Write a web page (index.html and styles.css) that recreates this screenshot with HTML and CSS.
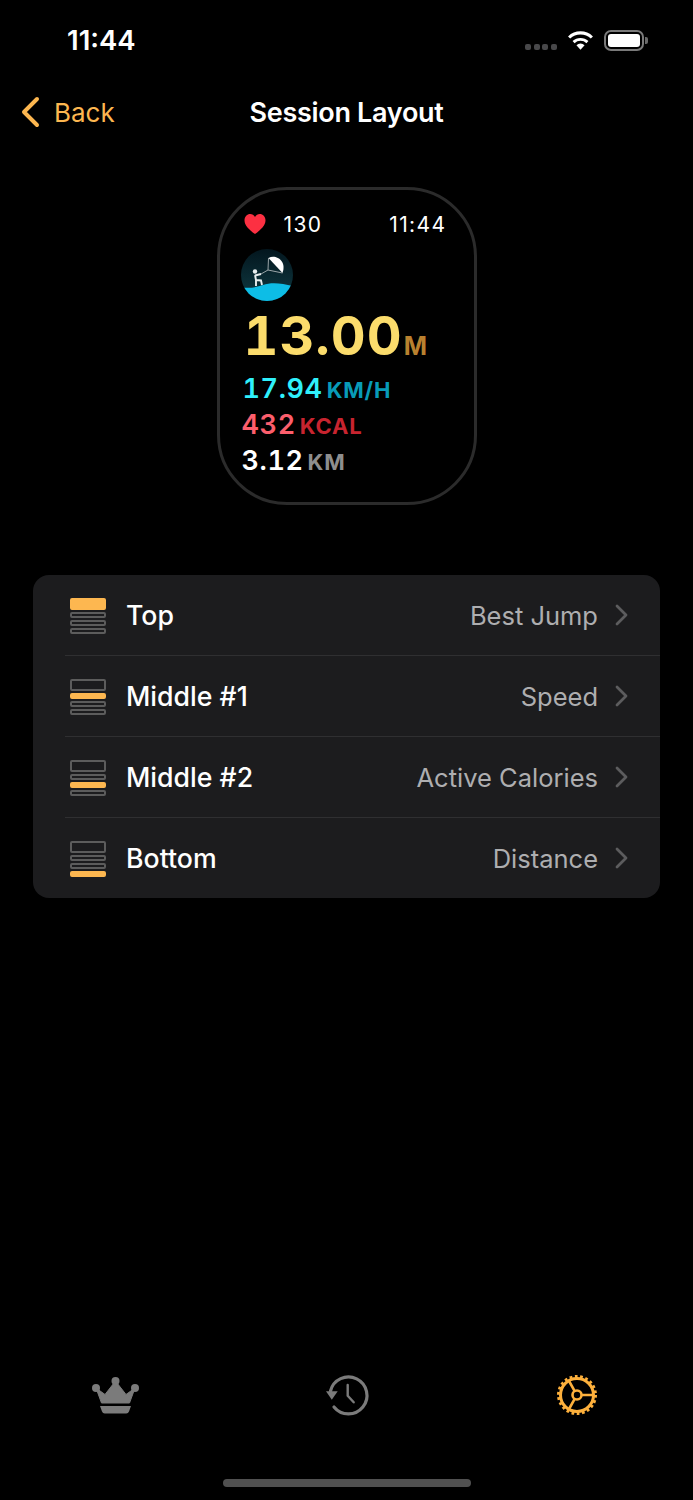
FILE: index.html
```html
<!DOCTYPE html>
<html lang="en">
<head>
    <meta charset="UTF-8">
    <title>Session Layout</title>
    <link rel="stylesheet" href="styles.css">
</head>
<body>
    <div class="screen">
        <!-- Status bar -->
        <div class="status-bar">
            <span class="clock">11:44</span>
            <div class="status-icons">
                <div class="signal"><i></i><i></i><i></i><i></i></div>
                <svg class="wifi" width="27" height="20" viewBox="0 0 28 20">
                    <path d="M14 20l-4.200-4.600a6 6 0 0 1 8.400 0z" fill="#fff"/>
                    <path d="M6.800 12.200a10.500 10.500 0 0 1 14.400 0" fill="none" stroke="#fff" stroke-width="3"/>
                    <path d="M2.200 7.400a17 17 0 0 1 23.600 0" fill="none" stroke="#fff" stroke-width="3.200"/>
                </svg>
                <div class="battery"><div class="battery-fill"></div></div>
                <div class="battery-nub"></div>
            </div>
        </div>

        <!-- Nav bar -->
        <div class="nav-bar">
            <div class="back">
                <svg width="20" height="32" viewBox="0 0 20 32"><path d="M17 3L4 16l13 13" fill="none" stroke="#fdb750" stroke-width="4" stroke-linecap="round" stroke-linejoin="round"/></svg>
                <span>Back</span>
            </div>
            <div class="nav-title">Session Layout</div>
        </div>

        <!-- Watch preview -->
        <div class="watch">
            <div class="watch-top">
                <svg width="22" height="20" viewBox="0 0 22 20"><path d="M11 20C5 15.500 0.500 11.500 0.500 6.200 0.500 2.600 3.200 0 6.200 0 8.200 0 10 1 11 3 12 1 13.800 0 15.800 0 18.800 0 21.500 2.600 21.500 6.200 21.500 11.500 17 15.500 11 20z" fill="#fc3042"/></svg>
                <span class="bpm">130</span>
                <span class="watch-time">11:44</span>
            </div>
            <svg class="sport-logo" width="52" height="52" viewBox="0 0 52 52">
                <defs>
                    <clipPath id="logo-clip"><circle cx="26" cy="26" r="26"/></clipPath>
                    <linearGradient id="logo-sky" x1="0" y1="0" x2="0" y2="1">
                        <stop offset="0" stop-color="#03161e"/>
                        <stop offset="0.7" stop-color="#0c3038"/>
                    </linearGradient>
                </defs>
                <g clip-path="url(#logo-clip)">
                    <rect width="52" height="52" fill="url(#logo-sky)"/>
                    <path d="M0 38C8 40 16 38 22 36 30 33 40 34 52 37V52H0z" fill="#0dbde6"/>
                </g>
                <path d="M27.500 9C35 5 46 12 41.500 24z" fill="#fff"/>
                <path d="M27.500 9L27 21 41.500 24M27 21L20 25" fill="none" stroke="#9aa5a8" stroke-width="1"/>
                <circle cx="14" cy="22.500" r="2.200" fill="#e8eeee"/>
                <path d="M14 26L15 31 20 31.500 21 36M15 31L15 37M14 26.500L20 25" fill="none" stroke="#e8eeee" stroke-width="1.900"/>
            </svg>
            <div class="metric metric-main"><span class="num">13.00</span><span class="unit">M</span></div>
            <div class="metric metric-speed"><span class="num">17.94</span><span class="unit">KM/H</span></div>
            <div class="metric metric-cal"><span class="num">432</span><span class="unit">KCAL</span></div>
            <div class="metric metric-dist"><span class="num">3.12</span><span class="unit">KM</span></div>
        </div>

        <!-- Settings list -->
        <div class="list">
            <div class="row">
                <div class="slots"><i class="big on"></i><i></i><i></i><i></i></div>
                <span class="row-label">Top</span>
                <span class="row-value">Best Jump</span>
                <svg class="chevron" width="13" height="22" viewBox="0 0 13 22"><path d="M2 2l9 9-9 9" fill="none" stroke="#5c5c5e" stroke-width="2.800" stroke-linecap="round" stroke-linejoin="round"/></svg>
            </div>
            <div class="row">
                <div class="slots"><i class="big"></i><i class="on"></i><i></i><i></i></div>
                <span class="row-label">Middle #1</span>
                <span class="row-value">Speed</span>
                <svg class="chevron" width="13" height="22" viewBox="0 0 13 22"><path d="M2 2l9 9-9 9" fill="none" stroke="#5c5c5e" stroke-width="2.800" stroke-linecap="round" stroke-linejoin="round"/></svg>
            </div>
            <div class="row">
                <div class="slots"><i class="big"></i><i></i><i class="on"></i><i></i></div>
                <span class="row-label">Middle #2</span>
                <span class="row-value">Active Calories</span>
                <svg class="chevron" width="13" height="22" viewBox="0 0 13 22"><path d="M2 2l9 9-9 9" fill="none" stroke="#5c5c5e" stroke-width="2.800" stroke-linecap="round" stroke-linejoin="round"/></svg>
            </div>
            <div class="row">
                <div class="slots"><i class="big"></i><i></i><i></i><i class="on"></i></div>
                <span class="row-label">Bottom</span>
                <span class="row-value">Distance</span>
                <svg class="chevron" width="13" height="22" viewBox="0 0 13 22"><path d="M2 2l9 9-9 9" fill="none" stroke="#5c5c5e" stroke-width="2.800" stroke-linecap="round" stroke-linejoin="round"/></svg>
            </div>
        </div>

        <!-- Tab bar -->
        <div class="tab-bar">
            <svg width="48" height="37" viewBox="0 0 48 37">
                <circle cx="23.500" cy="4" r="4" fill="#7b7b7b"/>
                <circle cx="4" cy="11" r="4" fill="#7b7b7b"/>
                <circle cx="43" cy="11" r="4" fill="#7b7b7b"/>
                <path d="M4 11L13 17.500 23.500 4 34 17.500 43 11 37.500 26H9.500z" fill="#7b7b7b" stroke="#7b7b7b" stroke-width="1" stroke-linejoin="round"/>
                <path d="M8 29H39L37 34.500A3 3 0 0 1 34 36.500H13A3 3 0 0 1 10 34.500z" fill="#7b7b7b"/>
            </svg>
            <svg width="46" height="44" viewBox="0 0 46 44">
                <path d="M5.500 18A18.500 18.500 0 1 1 9 34" fill="none" stroke="#7b7b7b" stroke-width="3.200" stroke-linecap="round"/>
                <path d="M1 18.300H12.700L6.800 26.700z" fill="#7b7b7b"/>
                <path d="M22.700 12V22.700L28.700 29.300" fill="none" stroke="#7b7b7b" stroke-width="2.400" stroke-linecap="round" stroke-linejoin="round"/>
            </svg>
            <svg width="44" height="44" viewBox="0 0 44 44">
                <circle cx="22" cy="22" r="16.500" fill="none" stroke="#fdb03c" stroke-width="3"/>
                <circle cx="22" cy="22" r="18.500" fill="none" stroke="#fdb03c" stroke-width="3" stroke-dasharray="2.700 2.580"/>
                <circle cx="22" cy="22" r="4.500" fill="none" stroke="#fdb03c" stroke-width="2.600"/>
                <path d="M26.500 22H38M19.700 18.100L14 8M19.700 25.900L14 36" fill="none" stroke="#fdb03c" stroke-width="2.600"/>
            </svg>
        </div>
        <div class="home-indicator"></div>
    </div>
</body>
</html>
```

FILE: styles.css
```css
body {
    margin: 0;
    background-color: #000;
    font-family: Inter, "Liberation Sans", sans-serif;
    color: white;
}
.screen {
    height: 1500px;
    display: flex;
    flex-direction: column;
    overflow: hidden;
}

/* Status bar */
.status-bar {
    height: 80px;
    display: flex;
    justify-content: space-between;
    align-items: center;
    padding: 0 45px 0 67px;
    box-sizing: border-box;
}
.clock {
    font-size: 27.500px;
    font-weight: 600;
}
.status-icons {
    display: flex;
    align-items: center;
}
.signal {
    display: flex;
    gap: 2.700px;
    margin-right: 10px;
    margin-top: 14px;
}
.signal i {
    width: 6px;
    height: 6px;
    border-radius: 2px;
    background-color: #48484a;
}
.wifi {
    margin-right: 10px;
}
.battery {
    width: 40px;
    height: 21px;
    padding: 2px;
    border: 2px solid #7a7a7a;
    border-radius: 7px;
    box-sizing: border-box;
}
.battery-fill {
    height: 100%;
    background-color: #fff;
    border-radius: 3px;
}
.battery-nub {
    width: 3px;
    height: 7px;
    margin-left: 1px;
    background-color: #6a6a6a;
    border-radius: 0 2px 2px 0;
}

/* Nav bar */
.nav-bar {
    height: 64px;
    display: flex;
    align-items: center;
    justify-content: center;
    position: relative;
}
.back {
    position: absolute;
    left: 20px;
    top: 16px;
    display: flex;
    align-items: center;
    gap: 14px;
    color: #fdb750;
    font-size: 26px;
}
.nav-title {
    font-size: 27px;
    font-weight: 600;
    letter-spacing: -0.3px;
}

/* Watch */
.watch {
    width: 260px;
    height: 318px;
    margin: 43px auto 0;
    padding: 22px 24px 0;
    border: 3px solid #2b2b2b;
    border-radius: 70px;
    box-sizing: border-box;
}
.watch-top {
    height: 24px;
    display: flex;
    align-items: center;
    font-size: 21px;
    letter-spacing: 1.4px;
}
.bpm {
    margin-left: 18px;
}
.watch-time {
    margin-left: auto;
    margin-right: 3px;
}
.sport-logo {
    display: block;
    margin-top: 13px;
    margin-left: -3px;
}
.metric {
    display: flex;
    align-items: baseline;
    font-weight: 600;
    height: 36px;
    line-height: 36px;
    font-size: 27px;
    letter-spacing: 0.600px;
    font-variant-numeric: tabular-nums;
}
.metric .unit {
    font-weight: 700;
    font-size: 22px;
    letter-spacing: 0.800px;
    margin-left: 4px;
}
.metric-main {
    height: 60px;
    line-height: 60px;
    margin: 5px 0 0 0;
    font-size: 54px;
    font-weight: 700;
    letter-spacing: 1px;
    color: #fbdc6c;
}
.metric-main .unit {
    font-size: 25px;
    margin-left: 1px;
    color: #b9812f;
}
.metric-speed {
    margin: 5px 0 0 -1px;
    color: #2ff0fb;
}
.metric-speed .unit {
    color: #089bb8;
}
.metric-cal {
    margin-left: -2px;
    color: #fc5e6c;
}
.metric-cal .unit {
    color: #c8242f;
}
.metric-dist {
    margin-left: -2px;
    color: #fff;
}
.metric-dist .unit {
    color: #8e8e8e;
}

/* Settings list */
.list {
    margin: 70px 33px 0;
    background-color: #1c1c1e;
    border-radius: 16px;
    overflow: hidden;
}
.row {
    height: 81px;
    margin-left: 32px;
    padding-right: 32px;
    padding-top: 2px;
    display: flex;
    align-items: center;
    box-sizing: border-box;
    border-top: 1px solid #2f2f31;
}
.row:first-child {
    border-top: none;
    height: 80px;
}
.slots {
    width: 36px;
    margin-left: 5px;
    margin-right: 20px;
    display: flex;
    flex-direction: column;
    gap: 2px;
}
.slots i {
    display: block;
    height: 6px;
    border: 2px solid #5c5c5c;
    border-radius: 2px;
    box-sizing: border-box;
}
.slots i.big {
    height: 12px;
}
.slots i.on {
    background-color: #fdb750;
    border-color: #fdb750;
}
.row-label {
    margin-top: -2px;
    font-size: 26.700px;
    font-weight: 500;
}
.row-value {
    margin-top: -2px;
    margin-left: auto;
    font-size: 25.500px;
    color: #aeaeb0;
}
.chevron {
    margin-left: 17px;
    margin-top: -2px;
}

/* Tab bar */
.tab-bar {
    margin-top: auto;
    height: 76px;
    display: flex;
    justify-content: space-between;
    align-items: center;
    padding: 0 94px 0 92px;
    box-sizing: border-box;
}
.home-indicator {
    width: 248px;
    height: 8px;
    margin: 46px auto 13px;
    border-radius: 4px;
    background-color: #505050;
}
```
